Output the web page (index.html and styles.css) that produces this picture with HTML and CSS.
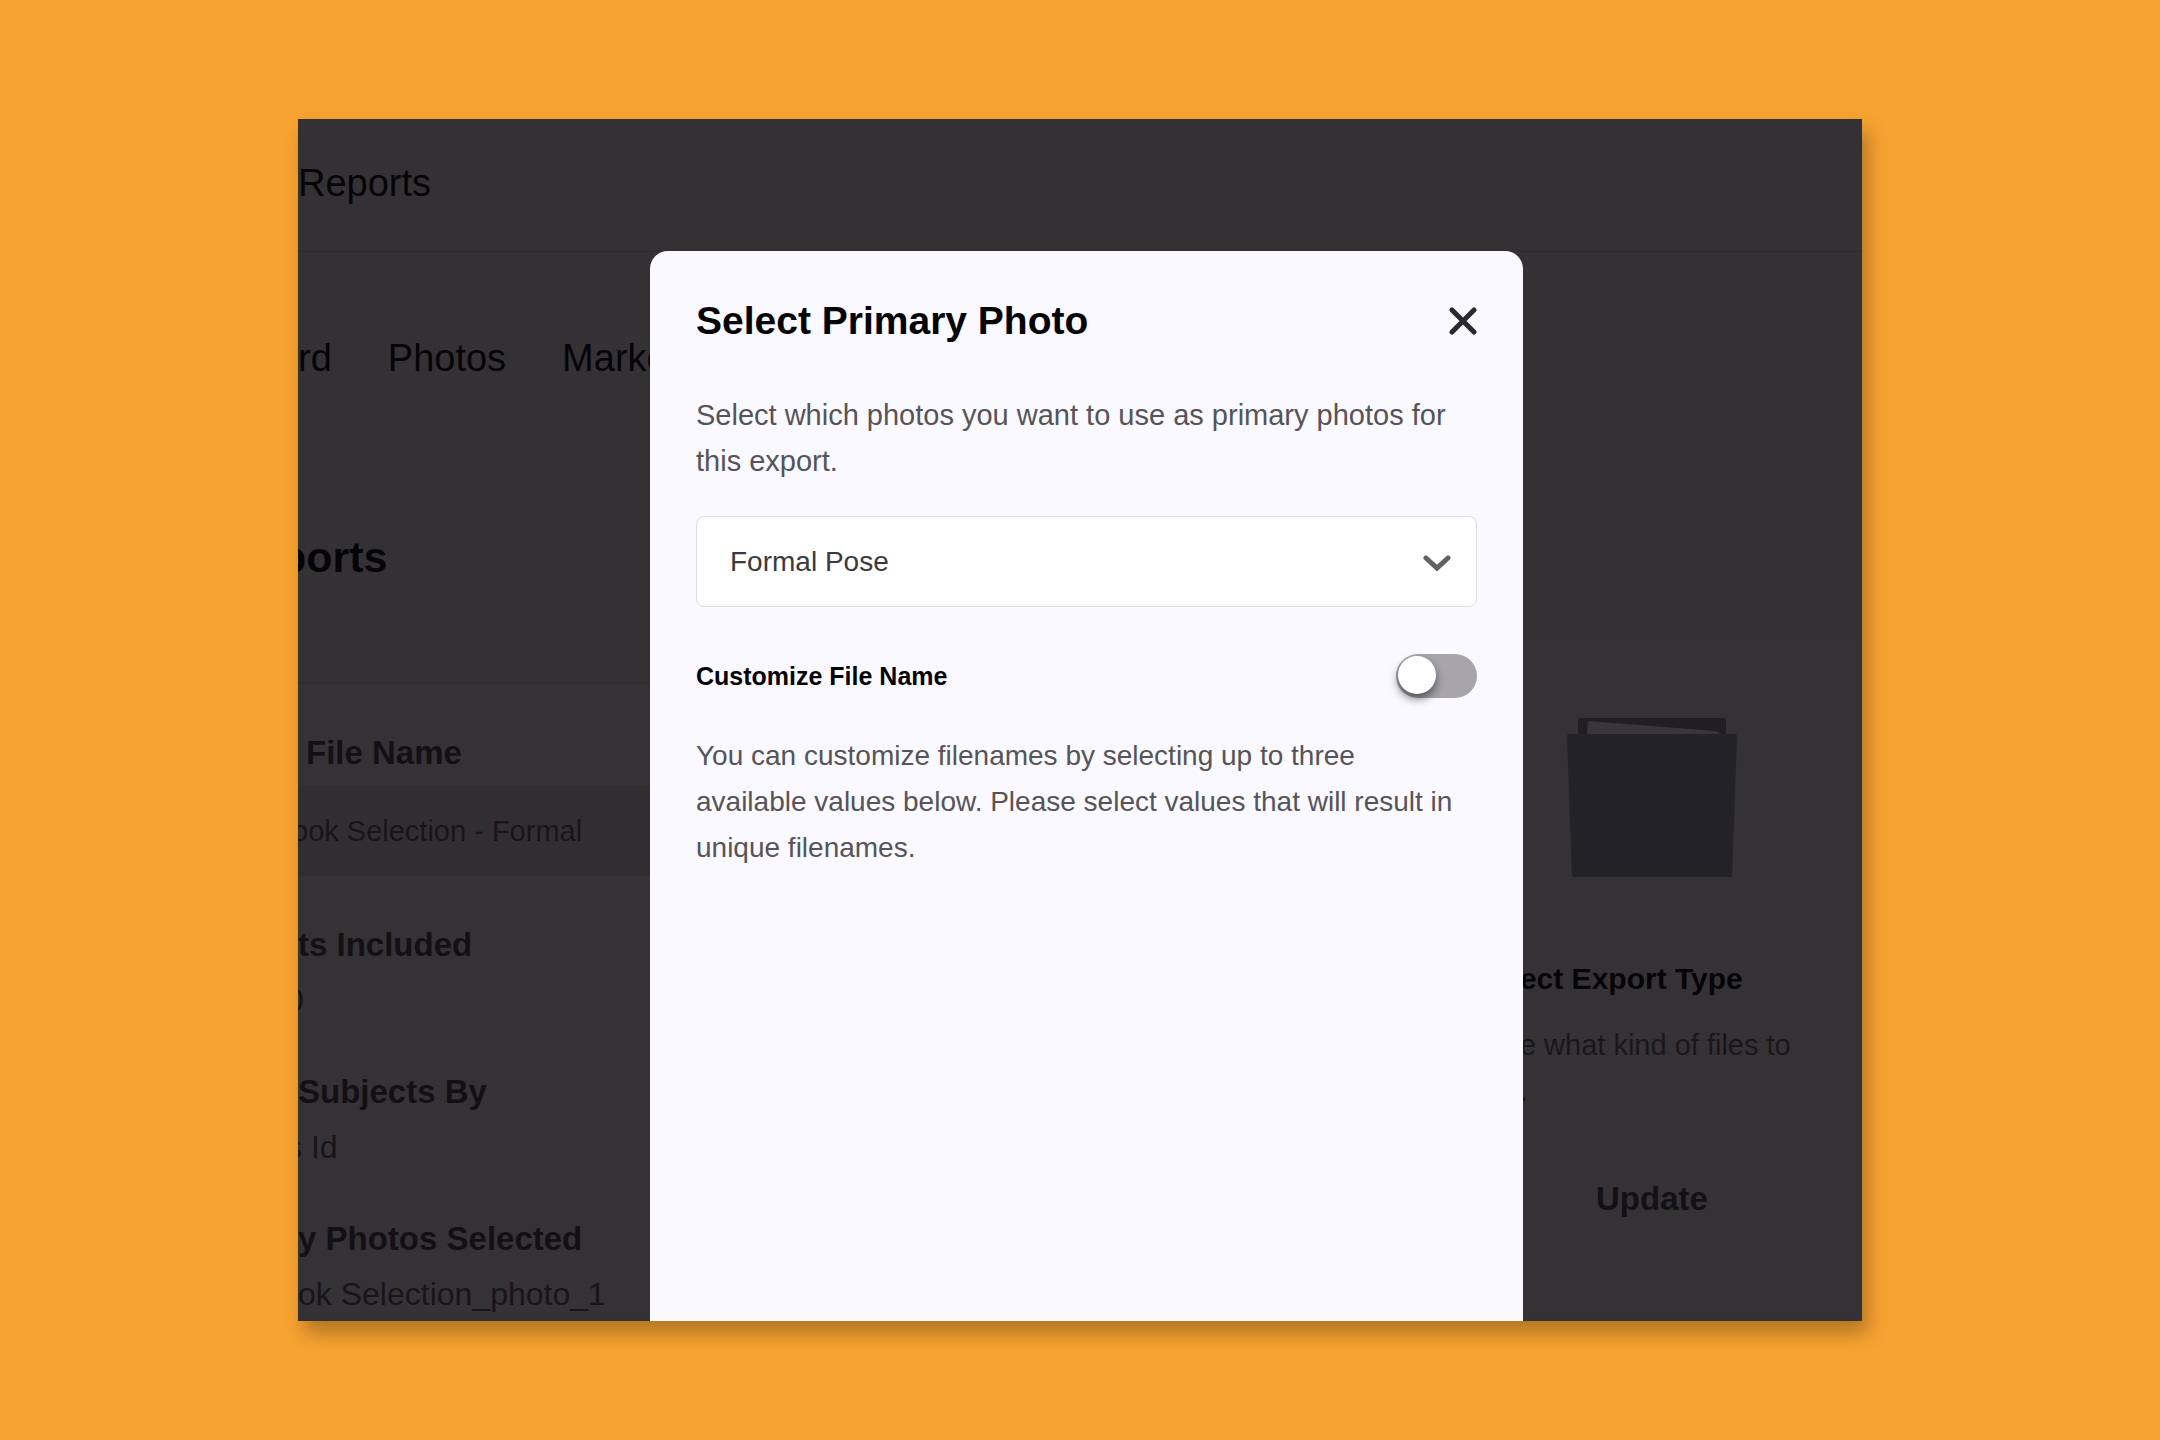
FILE: index.html
```html
<!DOCTYPE html>
<html lang="en">
<head>
  <meta charset="utf-8">
  <meta name="viewport" content="width=device-width, initial-scale=1">
  <title>Select Primary Photo</title>
  <link rel="stylesheet" href="styles.css">
</head>
<body>
  <div class="frame">
    <header class="topbar">Reports</header>

    <div class="columns">
      <main class="content">
        <nav class="tabs">
          <a href="#">rd</a>
          <a href="#">Photos</a>
          <a href="#">Marke</a>
        </nav>
        <h1 class="page-title bleed-l">ports</h1>
        <dl class="details">
          <div class="field">
            <dt class="inset">File Name</dt>
            <dd class="box"><span class="bleed-s">ook Selection - Formal</span></dd>
          </div>
          <div class="field">
            <dt>ts Included</dt>
            <dd class="bleed-m">0</dd>
          </div>
          <div class="field">
            <dt>Subjects By</dt>
            <dd class="bleed-m">s Id</dd>
          </div>
          <div class="field">
            <dt>y Photos Selected</dt>
            <dd>ok Selection_photo_1</dd>
          </div>
        </dl>
      </main>

      <aside class="export">
        <svg class="folder" viewBox="0 0 170 160" aria-hidden="true">
          <path fill="#201e23" d="M13 0H157Q159 0 159 3V18H11V3Q11 0 13 0Z"/>
          <path fill="#38363a" d="M21 3L148 13L154 16H20Z"/>
          <path fill="#232226" d="M2 16H168Q170 16 170 19L165 157Q165 159 162 159H7Q5 159 5 157L0 19Q0 16 2 16Z"/>
        </svg>
        <h2 class="export-title">ect Export Type</h2>
        <p class="export-text">e what kind of files to<br>.</p>
        <button class="update" type="button">Update</button>
      </aside>
    </div>

    <section class="modal" role="dialog" aria-labelledby="modal-title">
      <div class="modal-head">
        <h2 class="modal-title" id="modal-title">Select Primary Photo</h2>
        <button class="close" type="button" aria-label="Close">
          <svg viewBox="0 0 28 28" aria-hidden="true">
            <path d="M3 3L25 25M25 3L3 25" fill="none" stroke="#2b292d" stroke-width="5" stroke-linecap="round"/>
          </svg>
        </button>
      </div>
      <p class="modal-text"><label for="pose">Select which photos you want to use as primary photos for this export.</label></p>
      <div class="select-wrap">
        <select class="select" id="pose">
          <option>Formal Pose</option>
        </select>
        <svg class="chevron" viewBox="0 0 28 17" aria-hidden="true">
          <path d="M3 3L14 13L25 3" fill="none" stroke="#636165" stroke-width="5" stroke-linecap="round"/>
        </svg>
      </div>
      <div class="toggle-row">
        <label class="toggle-label" for="customize">Customize File Name</label>
        <input class="toggle" id="customize" type="checkbox" role="switch">
      </div>
      <p class="modal-hint">You can customize filenames by selecting up to three available values below. Please select values that will result in unique filenames.</p>
    </section>
  </div>
</body>
</html>
```
FILE: styles.css
```css
* {
  box-sizing: border-box;
}

body {
  display: flex;
  min-height: 100vh;
  margin: 0;
  padding: 119px 298px;
  background: #f7a331;
  font-family: "Liberation Sans", Arial, sans-serif;
  line-height: 46px;
}

h1, h2, p, dl, dd {
  margin: 0;
}

.frame {
  position: relative;
  flex: 1;
  min-width: 0;
  overflow: hidden;
  background: #343134;
  box-shadow: 6px 12px 18px rgba(0, 0, 0, 0.28);
}

/* Dimmed page behind the dialog */

.topbar {
  display: flex;
  align-items: center;
  height: 133px;
  padding-bottom: 4px;
  border-bottom: 1px solid #2e2c2f;
  color: #050407;
  font-size: 38px;
}

.columns {
  display: grid;
  grid-template-columns: 1fr 22%;
}

.content {
  min-width: 0;
  padding-top: 83px;
}

.tabs {
  display: flex;
  gap: 56px;
  font-size: 38px;
}

.tabs a {
  color: #050407;
  text-decoration: none;
}

.page-title {
  margin-top: 151px;
  color: #050407;
  font-size: 43px;
  line-height: 50px;
}

.details {
  display: flex;
  flex-direction: column;
  gap: 46px;
  margin-top: 101px;
  padding-top: 46px;
  border-top: 1px solid #302d30;
  background: #353235;
}

.field {
  display: flex;
  flex-direction: column;
  gap: 9px;
}

.field dt {
  color: #121014;
  font-size: 33px;
  font-weight: bold;
}

.field dd {
  color: #171518;
  font-size: 32px;
}

.field .box {
  padding: 23px 0 22px;
  background: #312e31;
  font-size: 29px;
}

.field .inset {
  padding-left: 8px;
}

.bleed-s {
  margin-left: -6px;
}

.bleed-m {
  margin-left: -12px;
}

.bleed-l {
  margin-left: -18px;
}

.export {
  display: flex;
  flex-direction: column;
  align-items: flex-start;
  margin-top: 388px;
  padding: 78px 0 0 2px;
  background: #353235;
}

.folder {
  width: 170px;
  height: 160px;
  margin-left: 47px;
}

.export-title {
  margin-top: 78px;
  color: #050407;
  font-size: 30px;
}

.export-text {
  margin-top: 20px;
  color: #19171a;
  font-size: 29px;
}

.update {
  width: 170px;
  height: 46px;
  margin: 62px 0 0 47px;
  padding: 0;
  border: 0;
  background: none;
  color: #121014;
  font: bold 33px/46px "Liberation Sans", Arial, sans-serif;
}

/* Dialog */

.modal {
  position: absolute;
  top: 132px;
  bottom: 0;
  left: 352px;
  right: 339px;
  padding: 47px 46px;
  border-radius: 18px 18px 0 0;
  background: #faf9ff;
}

.modal-head {
  display: flex;
  align-items: center;
  justify-content: space-between;
}

.modal-title {
  color: #050407;
  font-size: 39px;
}

.close {
  display: flex;
  padding: 0;
  border: 0;
  background: none;
}

.close svg {
  width: 28px;
  height: 28px;
}

.modal-text {
  margin-top: 48px;
  color: #565459;
  font-size: 29px;
}

.modal-hint {
  margin-top: 34px;
  padding-right: 10px;
  color: #565459;
  font-size: 28px;
}

.select-wrap {
  position: relative;
  margin-top: 32px;
}

.select {
  display: block;
  width: 100%;
  height: 91px;
  padding: 0 33px;
  border: 1px solid #dedde3;
  border-radius: 8px;
  appearance: none;
  background: #fff;
  color: #3c3a3e;
  font: 28px "Liberation Sans", Arial, sans-serif;
}

.chevron {
  position: absolute;
  top: 39px;
  right: 26px;
  width: 28px;
  height: 17px;
  pointer-events: none;
}

.toggle-row {
  display: flex;
  align-items: center;
  justify-content: space-between;
  margin-top: 46px;
}

.toggle-label {
  color: #050407;
  font-size: 25px;
  font-weight: bold;
}

.toggle {
  width: 81px;
  height: 44px;
  margin: 0;
  padding: 2px;
  border-radius: 22px;
  appearance: none;
  background: #a7a5aa;
}

.toggle::before {
  display: block;
  width: 38px;
  height: 38px;
  border-radius: 50%;
  background: #fff;
  box-shadow: 0 5px 8px rgba(0, 0, 0, 0.5);
  content: "";
}

.toggle:checked::before {
  margin-left: auto;
}
```
